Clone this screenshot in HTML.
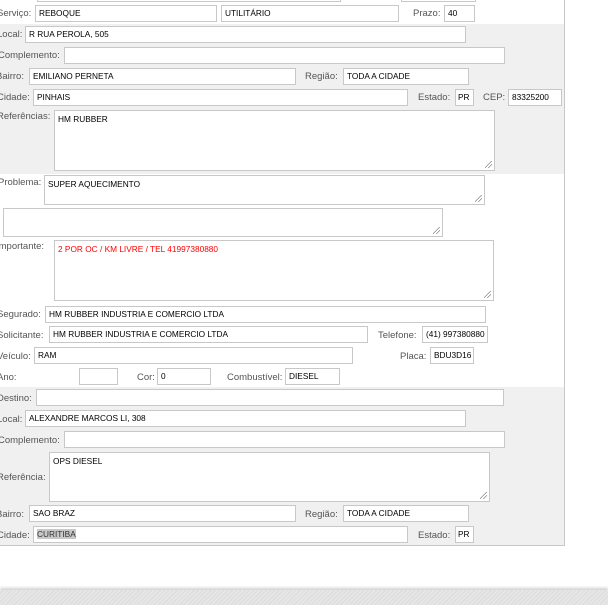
<!DOCTYPE html>
<html><head><meta charset="utf-8"><style>
body{margin:0;width:608px;height:605px;background:#fff;position:relative;overflow:hidden;font-family:"Liberation Sans",sans-serif;}
.g{position:absolute;left:0;width:564px;background:#f0f0f0;}
.l{position:absolute;font-size:9.5px;color:#555;white-space:nowrap;line-height:11px;}
.i{position:absolute;background:#fff;border:1px solid #c8c8c8;box-sizing:border-box;font-size:8.3px;color:#000;padding:0 3px;line-height:15px;white-space:nowrap;overflow:hidden;}
.t{line-height:11px;padding-top:3px;}
.t:after{content:"";position:absolute;right:2px;bottom:2px;width:7px;height:7px;background:linear-gradient(135deg,transparent 45%,#888 45%,#888 52%,transparent 52%,transparent 70%,#888 70%,#888 77%,transparent 77%);}
</style></head><body>
<div class="g" style="top:24px;height:150px"></div>
<div class="g" style="top:387px;height:158px"></div>
<div style="position:absolute;left:564px;top:0;width:1px;height:546px;background:#c8c8c8"></div>
<div style="position:absolute;left:0;top:545px;width:565px;height:1px;background:#c8c8c8"></div>
<div style="position:absolute;left:0;top:590px;width:608px;height:15px;background:repeating-linear-gradient(135deg,#e6e6e6 0 2px,#dcdcdc 2px 3px);box-shadow:0 -2px 3px #d0d0d0"></div>

<div class="i" style="left:37px;top:-14px;width:304px;height:16px"></div>
<div class="i" style="left:401px;top:-14px;width:75px;height:16px"></div>

<div class="l" style="left:-3px;top:8px">Serviço:</div>
<div class="i" style="left:35px;top:5px;width:182px;height:17px">REBOQUE</div>
<div class="i" style="left:221px;top:5px;width:178px;height:17px">UTILITÁRIO</div>
<div class="l" style="left:413px;top:8px">Prazo:</div>
<div class="i" style="left:444px;top:5px;width:31px;height:17px">40</div>

<div class="l" style="left:-3px;top:29px">Local:</div>
<div class="i" style="left:25px;top:26px;width:441px;height:17px">R RUA PEROLA, 505</div>
<div class="l" style="left:-2px;top:50px">Complemento:</div>
<div class="i" style="left:64px;top:47px;width:441px;height:17px"></div>
<div class="l" style="left:-4px;top:71px">Bairro:</div>
<div class="i" style="left:29px;top:68px;width:267px;height:17px">EMILIANO PERNETA</div>
<div class="l" style="left:305px;top:71px">Região:</div>
<div class="i" style="left:343px;top:68px;width:126px;height:17px">TODA A CIDADE</div>
<div class="l" style="left:-3px;top:92px">Cidade:</div>
<div class="i" style="left:33px;top:89px;width:375px;height:17px">PINHAIS</div>
<div class="l" style="left:418px;top:92px">Estado:</div>
<div class="i" style="left:455px;top:89px;width:19px;height:17px;padding:0 2px">PR</div>
<div class="l" style="left:483px;top:92px">CEP:</div>
<div class="i" style="left:508px;top:89px;width:54px;height:17px">83325200</div>
<div class="l" style="left:-3px;top:111px">Referências:</div>
<div class="i t" style="left:54px;top:110px;width:441px;height:61px">HM RUBBER</div>

<div class="l" style="left:-2px;top:177px">Problema:</div>
<div class="i t" style="left:44px;top:175px;width:441px;height:30px">SUPER AQUECIMENTO</div>
<div class="i t" style="left:3px;top:208px;width:440px;height:29px"></div>
<div class="l" style="left:-4px;top:241px">Importante:</div>
<div class="i t" style="left:54px;top:240px;width:440px;height:61px;color:#f00">2 POR OC / KM LIVRE / TEL 41997380880</div>

<div class="l" style="left:-3px;top:309px">Segurado:</div>
<div class="i" style="left:45px;top:306px;width:441px;height:17px">HM RUBBER INDUSTRIA E COMERCIO LTDA</div>
<div class="l" style="left:-3px;top:330px">Solicitante:</div>
<div class="i" style="left:49px;top:326px;width:319px;height:17px">HM RUBBER INDUSTRIA E COMERCIO LTDA</div>
<div class="l" style="left:378px;top:330px">Telefone:</div>
<div class="i" style="left:422px;top:326px;width:66px;height:17px">(41) 997380880</div>
<div class="l" style="left:-3px;top:351px">Veículo:</div>
<div class="i" style="left:34px;top:347px;width:319px;height:17px">RAM</div>
<div class="l" style="left:400px;top:351px">Placa:</div>
<div class="i" style="left:430px;top:347px;width:44px;height:17px">BDU3D16</div>
<div class="l" style="left:-3px;top:372px">Ano:</div>
<div class="i" style="left:79px;top:368px;width:39px;height:17px"></div>
<div class="l" style="left:137px;top:372px">Cor:</div>
<div class="i" style="left:157px;top:368px;width:54px;height:17px">0</div>
<div class="l" style="left:227px;top:372px">Combustível:</div>
<div class="i" style="left:285px;top:368px;width:55px;height:17px">DIESEL</div>

<div class="l" style="left:-3px;top:393px">Destino:</div>
<div class="i" style="left:36px;top:389px;width:468px;height:17px"></div>
<div class="l" style="left:-3px;top:414px">Local:</div>
<div class="i" style="left:25px;top:410px;width:441px;height:17px">ALEXANDRE MARCOS LI, 308</div>
<div class="l" style="left:-2px;top:435px">Complemento:</div>
<div class="i" style="left:64px;top:431px;width:441px;height:17px"></div>
<div class="l" style="left:-3px;top:472px">Referência:</div>
<div class="i t" style="left:49px;top:452px;width:441px;height:50px">OPS DIESEL</div>
<div class="l" style="left:-4px;top:509px">Bairro:</div>
<div class="i" style="left:29px;top:505px;width:267px;height:17px">SAO BRAZ</div>
<div class="l" style="left:305px;top:509px">Região:</div>
<div class="i" style="left:343px;top:505px;width:126px;height:17px">TODA A CIDADE</div>
<div class="l" style="left:-3px;top:530px">Cidade:</div>
<div class="i" style="left:33px;top:526px;width:375px;height:17px"><span style="background:#c8c8c8;color:#333">CURITIBA</span></div>
<div class="l" style="left:418px;top:530px">Estado:</div>
<div class="i" style="left:455px;top:526px;width:19px;height:17px;padding:0 2px">PR</div>
</body></html>
